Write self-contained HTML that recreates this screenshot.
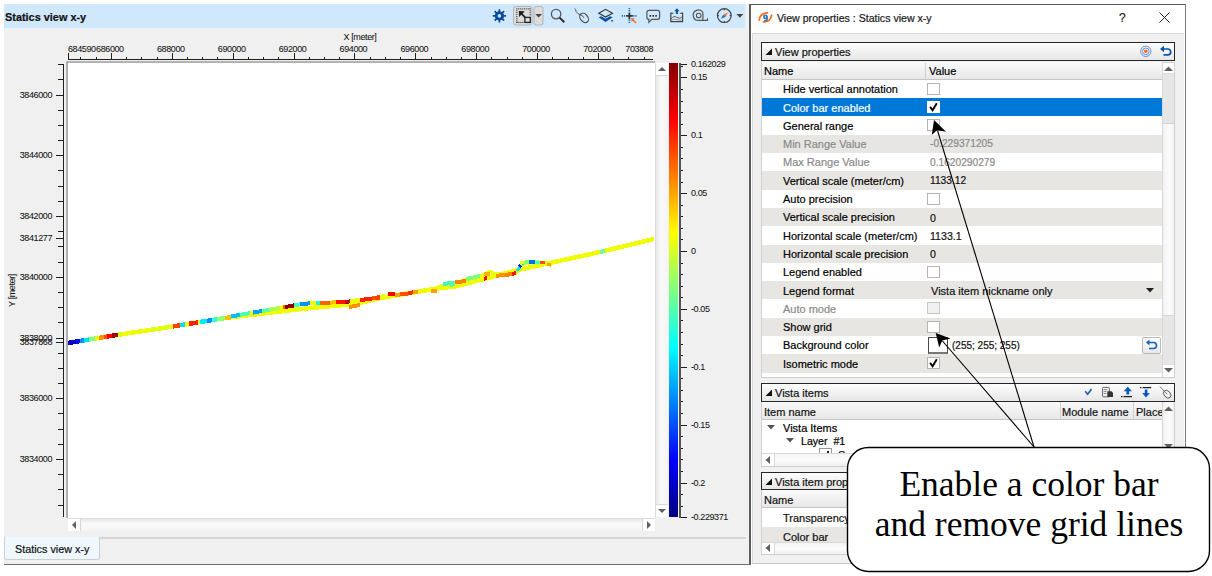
<!DOCTYPE html><html><head><meta charset="utf-8"><style>
html,body{margin:0;padding:0;}
body{width:1212px;height:576px;position:relative;overflow:hidden;background:#fff;font-family:"Liberation Sans", sans-serif;}
.t{position:absolute;white-space:nowrap;line-height:1;-webkit-text-stroke:0.2px currentColor;}
.ax{font-size:9px;letter-spacing:-0.4px;color:#111;-webkit-text-stroke:0.05px currentColor;}
</style></head><body>
<div id="left" style="position:absolute;left:4px;top:4px;width:747px;height:561px;background:#f0f0f0;"></div>
<div style="position:absolute;left:749px;top:4px;width:2px;height:561px;background:#5c5c5c;"></div>
<div style="position:absolute;left:4px;top:564px;width:747px;height:1px;background:#6e6e6e;"></div>
<div style="position:absolute;left:4px;top:4px;width:741px;height:24px;background:#cfe8fc;"></div>
<div class="t" style="left:5px;top:11.5px;font-size:10.9px;font-weight:bold;color:#111;">Statics view x-y</div>
<svg style="position:absolute;left:0;top:0" width="1212" height="576"><rect x="66" y="61" width="589" height="457" fill="#ffffff"/><path d="M67 518 V62 H655" stroke="#9a9a9a" stroke-width="1.6" fill="none"/><path d="M68 59.5 H653" stroke="#1e1e1e" stroke-width="1"/><path d="M80.5 57 V59" stroke="#1e1e1e" stroke-width="1"/><path d="M96.5 57 V59" stroke="#1e1e1e" stroke-width="1"/><path d="M111.5 53 V59" stroke="#1e1e1e" stroke-width="1"/><path d="M126.5 57 V59" stroke="#1e1e1e" stroke-width="1"/><path d="M141.5 57 V59" stroke="#1e1e1e" stroke-width="1"/><path d="M157.5 57 V59" stroke="#1e1e1e" stroke-width="1"/><path d="M172.5 53 V59" stroke="#1e1e1e" stroke-width="1"/><path d="M187.5 57 V59" stroke="#1e1e1e" stroke-width="1"/><path d="M202.5 57 V59" stroke="#1e1e1e" stroke-width="1"/><path d="M217.5 57 V59" stroke="#1e1e1e" stroke-width="1"/><path d="M233.5 53 V59" stroke="#1e1e1e" stroke-width="1"/><path d="M248.5 57 V59" stroke="#1e1e1e" stroke-width="1"/><path d="M263.5 57 V59" stroke="#1e1e1e" stroke-width="1"/><path d="M278.5 57 V59" stroke="#1e1e1e" stroke-width="1"/><path d="M294.5 53 V59" stroke="#1e1e1e" stroke-width="1"/><path d="M309.5 57 V59" stroke="#1e1e1e" stroke-width="1"/><path d="M324.5 57 V59" stroke="#1e1e1e" stroke-width="1"/><path d="M339.5 57 V59" stroke="#1e1e1e" stroke-width="1"/><path d="M354.5 53 V59" stroke="#1e1e1e" stroke-width="1"/><path d="M370.5 57 V59" stroke="#1e1e1e" stroke-width="1"/><path d="M385.5 57 V59" stroke="#1e1e1e" stroke-width="1"/><path d="M400.5 57 V59" stroke="#1e1e1e" stroke-width="1"/><path d="M415.5 53 V59" stroke="#1e1e1e" stroke-width="1"/><path d="M431.5 57 V59" stroke="#1e1e1e" stroke-width="1"/><path d="M446.5 57 V59" stroke="#1e1e1e" stroke-width="1"/><path d="M461.5 57 V59" stroke="#1e1e1e" stroke-width="1"/><path d="M476.5 53 V59" stroke="#1e1e1e" stroke-width="1"/><path d="M491.5 57 V59" stroke="#1e1e1e" stroke-width="1"/><path d="M507.5 57 V59" stroke="#1e1e1e" stroke-width="1"/><path d="M522.5 57 V59" stroke="#1e1e1e" stroke-width="1"/><path d="M537.5 53 V59" stroke="#1e1e1e" stroke-width="1"/><path d="M552.5 57 V59" stroke="#1e1e1e" stroke-width="1"/><path d="M568.5 57 V59" stroke="#1e1e1e" stroke-width="1"/><path d="M583.5 57 V59" stroke="#1e1e1e" stroke-width="1"/><path d="M598.5 53 V59" stroke="#1e1e1e" stroke-width="1"/><path d="M613.5 57 V59" stroke="#1e1e1e" stroke-width="1"/><path d="M628.5 57 V59" stroke="#1e1e1e" stroke-width="1"/><path d="M644.5 57 V59" stroke="#1e1e1e" stroke-width="1"/><path d="M68.5 53 V59" stroke="#1e1e1e" stroke-width="1"/><path d="M63.5 64 V517" stroke="#1e1e1e" stroke-width="1"/><path d="M58 64.5 H63" stroke="#1e1e1e" stroke-width="1"/><path d="M58 79.5 H63" stroke="#1e1e1e" stroke-width="1"/><path d="M56 95.5 H63" stroke="#1e1e1e" stroke-width="1"/><path d="M58 110.5 H63" stroke="#1e1e1e" stroke-width="1"/><path d="M58 125.5 H63" stroke="#1e1e1e" stroke-width="1"/><path d="M58 140.5 H63" stroke="#1e1e1e" stroke-width="1"/><path d="M56 155.5 H63" stroke="#1e1e1e" stroke-width="1"/><path d="M58 170.5 H63" stroke="#1e1e1e" stroke-width="1"/><path d="M58 186.5 H63" stroke="#1e1e1e" stroke-width="1"/><path d="M58 201.5 H63" stroke="#1e1e1e" stroke-width="1"/><path d="M56 216.5 H63" stroke="#1e1e1e" stroke-width="1"/><path d="M58 231.5 H63" stroke="#1e1e1e" stroke-width="1"/><path d="M58 246.5 H63" stroke="#1e1e1e" stroke-width="1"/><path d="M58 262.5 H63" stroke="#1e1e1e" stroke-width="1"/><path d="M56 277.5 H63" stroke="#1e1e1e" stroke-width="1"/><path d="M58 292.5 H63" stroke="#1e1e1e" stroke-width="1"/><path d="M58 307.5 H63" stroke="#1e1e1e" stroke-width="1"/><path d="M58 322.5 H63" stroke="#1e1e1e" stroke-width="1"/><path d="M56 338.5 H63" stroke="#1e1e1e" stroke-width="1"/><path d="M58 353.5 H63" stroke="#1e1e1e" stroke-width="1"/><path d="M58 368.5 H63" stroke="#1e1e1e" stroke-width="1"/><path d="M58 383.5 H63" stroke="#1e1e1e" stroke-width="1"/><path d="M56 398.5 H63" stroke="#1e1e1e" stroke-width="1"/><path d="M58 413.5 H63" stroke="#1e1e1e" stroke-width="1"/><path d="M58 429.5 H63" stroke="#1e1e1e" stroke-width="1"/><path d="M58 444.5 H63" stroke="#1e1e1e" stroke-width="1"/><path d="M56 459.5 H63" stroke="#1e1e1e" stroke-width="1"/><path d="M58 474.5 H63" stroke="#1e1e1e" stroke-width="1"/><path d="M58 489.5 H63" stroke="#1e1e1e" stroke-width="1"/><path d="M58 505.5 H63" stroke="#1e1e1e" stroke-width="1"/><path d="M56 238.5 H63" stroke="#1e1e1e" stroke-width="1"/><path d="M56 342.5 H63" stroke="#1e1e1e" stroke-width="1"/><g shape-rendering="crispEdges"><path d="M68.0 343.0 L120.0 334.5 L160.0 328.5 L225.0 318.0 L305.0 308.5 L355.0 304.0 L380.0 298.0 L440.0 288.0 L455.0 286.5 L520.0 269.5 L600.0 252.0 L654.0 239.0" stroke="#f0ff00" stroke-width="4.5" fill="none" stroke-linejoin="round"/><path d="M228.0 317.0 L305.0 303.5 L345.0 302.0 L372.0 298.5 L385.0 296.0" stroke="#f0ff00" stroke-width="4" fill="none" stroke-linejoin="round"/><path d="M438.0 287.5 L447.0 284.0 L455.0 283.0 L480.0 276.5 L490.0 272.0 L496.0 274.5 L516.0 273.0 L519.0 268.0 L523.0 263.5 L535.0 262.0 L552.0 264.0" stroke="#e8ff10" stroke-width="4" fill="none" stroke-linejoin="round"/><path d="M68.0 343.0 L76.0 341.7" stroke="#0000c0" stroke-width="4.5"/><path d="M76.0 341.7 L80.0 341.0" stroke="#0010f0" stroke-width="4.5"/><path d="M80.0 341.0 L84.0 340.4" stroke="#0090ff" stroke-width="4.5"/><path d="M84.0 340.4 L89.0 339.6" stroke="#00e0f0" stroke-width="4.5"/><path d="M89.0 339.6 L95.0 338.6" stroke="#80ff80" stroke-width="4.5"/><path d="M95.0 338.6 L99.0 337.9" stroke="#f0ff00" stroke-width="4.5"/><path d="M99.0 337.9 L104.0 337.1" stroke="#ff9000" stroke-width="4.5"/><path d="M104.0 337.1 L107.0 336.6" stroke="#ff5000" stroke-width="4.5"/><path d="M107.0 336.6 L112.0 335.8" stroke="#ff0000" stroke-width="4.5"/><path d="M112.0 335.8 L118.0 334.8" stroke="#a00000" stroke-width="4.5"/><path d="M118.0 334.8 L121.0 334.4" stroke="#d0ff20" stroke-width="4.5"/><path d="M150.0 330.0 L173.0 326.4" stroke="#e0ff10" stroke-width="4.5"/><path d="M173.0 326.4 L180.0 325.3" stroke="#ff4000" stroke-width="4.5"/><path d="M180.0 325.3 L185.0 324.5" stroke="#00e0ff" stroke-width="4.5"/><path d="M185.0 324.5 L189.0 323.8" stroke="#f8ff00" stroke-width="4.5"/><path d="M189.0 323.8 L198.0 322.4" stroke="#ff2000" stroke-width="4.5"/><path d="M200.0 322.0 L207.0 320.9" stroke="#00e8ff" stroke-width="4.5"/><path d="M207.0 320.9 L212.0 320.1" stroke="#0090ff" stroke-width="4.5"/><path d="M212.0 320.1 L217.0 319.3" stroke="#30ffd0" stroke-width="4.5"/><path d="M217.0 319.3 L225.0 318.0" stroke="#90ff70" stroke-width="4.5"/><path d="M225.0 318.0 L231.0 317.3" stroke="#ffc000" stroke-width="4.5"/><path d="M600.0 252.0 L605.0 250.8" stroke="#70ffa0" stroke-width="4.5"/><path d="M231.0 316.5 L240.0 314.9" stroke="#00c0ff" stroke-width="4"/><path d="M240.0 314.9 L250.0 313.1" stroke="#50ffb0" stroke-width="4"/><path d="M253.0 312.6 L262.0 311.0" stroke="#00a0ff" stroke-width="4"/><path d="M262.0 311.0 L270.0 309.6" stroke="#60ffa0" stroke-width="4"/><path d="M270.0 309.6 L280.0 307.9" stroke="#b0ff50" stroke-width="4"/><path d="M283.0 307.4 L285.0 307.0" stroke="#ff6000" stroke-width="4"/><path d="M285.0 307.0 L294.0 305.4" stroke="#900000" stroke-width="4"/><path d="M294.0 305.4 L295.0 305.3" stroke="#ff6000" stroke-width="4"/><path d="M294.0 305.4 L300.0 304.4" stroke="#40ffc0" stroke-width="4"/><path d="M300.0 304.4 L310.0 303.3" stroke="#0090ff" stroke-width="4"/><path d="M316.0 303.1 L320.0 302.9" stroke="#20f0e0" stroke-width="4"/><path d="M320.0 302.9 L330.0 302.6" stroke="#ff6000" stroke-width="4"/><path d="M330.0 302.6 L336.0 302.3" stroke="#ffc000" stroke-width="4"/><path d="M336.0 302.3 L345.0 302.0" stroke="#ff1000" stroke-width="4"/><path d="M345.0 302.0 L350.0 301.4" stroke="#c00000" stroke-width="4"/><path d="M360.0 300.1 L372.0 298.5" stroke="#ff2000" stroke-width="4"/><path d="M372.0 298.5 L380.0 297.0" stroke="#ff5000" stroke-width="4"/><path d="M349.0 307.0 L360.0 305.0" stroke="#ff9000" stroke-width="4"/><path d="M375.0 298.0 L380.0 297.5" stroke="#ff4000" stroke-width="4"/><path d="M388.0 294.5 L395.0 293.5" stroke="#f00000" stroke-width="4"/><path d="M395.0 295.0 L400.0 294.5" stroke="#ffa000" stroke-width="4"/><path d="M400.0 294.5 L408.0 293.5" stroke="#ff5000" stroke-width="4"/><path d="M408.0 293.0 L416.0 292.0" stroke="#ff3000" stroke-width="4"/><path d="M413.0 292.0 L418.0 291.5" stroke="#ffa000" stroke-width="4"/><path d="M431.0 291.5 L437.0 290.5" stroke="#ffa000" stroke-width="4"/><path d="M443.0 284.0 L455.0 282.5" stroke="#40ffc0" stroke-width="4"/><path d="M450.0 285.0 L455.0 284.0" stroke="#60ffa0" stroke-width="4"/><path d="M455.0 282.5 L466.0 281.0" stroke="#ff8000" stroke-width="4"/><path d="M466.0 279.0 L480.0 276.0" stroke="#80ff80" stroke-width="4"/><path d="M484.0 278.7 L487.0 278.2" stroke="#ff0000" stroke-width="4"/><path d="M484.0 274.5 L490.0 273.5" stroke="#ffb000" stroke-width="4"/><path d="M496.0 275.8 L505.0 275.0" stroke="#ff9000" stroke-width="4"/><path d="M505.0 275.0 L512.0 274.0" stroke="#ff8000" stroke-width="4"/><path d="M512.0 273.8 L516.0 273.2" stroke="#ff1000" stroke-width="4"/><path d="M517.0 271.0 L520.0 267.0" stroke="#00e0ff" stroke-width="3"/><path d="M519.0 267.0 L521.0 265.0" stroke="#0020ff" stroke-width="3"/><path d="M521.0 264.5 L524.0 263.0" stroke="#00e0ff" stroke-width="3"/><path d="M520.0 263.0 L524.0 262.5" stroke="#f8ff00" stroke-width="3.5"/><path d="M524.0 262.3 L529.0 262.0" stroke="#80ff60" stroke-width="3.5"/><path d="M529.0 261.8 L535.0 261.8" stroke="#0070ff" stroke-width="3.5"/><path d="M535.0 262.3 L540.0 262.5" stroke="#40ffd0" stroke-width="3.5"/><path d="M540.0 262.5 L545.0 262.7" stroke="#ff5000" stroke-width="3.5"/><path d="M547.0 264.5 L551.0 264.8" stroke="#ffa000" stroke-width="3.5"/></g><defs><linearGradient id="jet" x1="0" y1="0" x2="0" y2="1"><stop offset="0" stop-color="#800000"/><stop offset="0.125" stop-color="#ff0000"/><stop offset="0.375" stop-color="#ffff00"/><stop offset="0.625" stop-color="#00ffff"/><stop offset="0.875" stop-color="#0000ff"/><stop offset="1" stop-color="#000080"/></linearGradient></defs><rect x="669" y="63" width="9" height="454" fill="url(#jet)"/><path d="M680 63 V518" stroke="#555" stroke-width="2"/><path d="M681 66.5 H683" stroke="#1a1a1a" stroke-width="1"/><path d="M681 77.5 H687" stroke="#1a1a1a" stroke-width="1"/><path d="M681 89.5 H683" stroke="#1a1a1a" stroke-width="1"/><path d="M681 101.5 H683" stroke="#1a1a1a" stroke-width="1"/><path d="M681 112.5 H683" stroke="#1a1a1a" stroke-width="1"/><path d="M681 124.5 H683" stroke="#1a1a1a" stroke-width="1"/><path d="M681 135.5 H687" stroke="#1a1a1a" stroke-width="1"/><path d="M681 147.5 H683" stroke="#1a1a1a" stroke-width="1"/><path d="M681 158.5 H683" stroke="#1a1a1a" stroke-width="1"/><path d="M681 170.5 H683" stroke="#1a1a1a" stroke-width="1"/><path d="M681 182.5 H683" stroke="#1a1a1a" stroke-width="1"/><path d="M681 193.5 H687" stroke="#1a1a1a" stroke-width="1"/><path d="M681 205.5 H683" stroke="#1a1a1a" stroke-width="1"/><path d="M681 216.5 H683" stroke="#1a1a1a" stroke-width="1"/><path d="M681 228.5 H683" stroke="#1a1a1a" stroke-width="1"/><path d="M681 239.5 H683" stroke="#1a1a1a" stroke-width="1"/><path d="M681 251.5 H687" stroke="#1a1a1a" stroke-width="1"/><path d="M681 263.5 H683" stroke="#1a1a1a" stroke-width="1"/><path d="M681 274.5 H683" stroke="#1a1a1a" stroke-width="1"/><path d="M681 286.5 H683" stroke="#1a1a1a" stroke-width="1"/><path d="M681 297.5 H683" stroke="#1a1a1a" stroke-width="1"/><path d="M681 309.5 H687" stroke="#1a1a1a" stroke-width="1"/><path d="M681 320.5 H683" stroke="#1a1a1a" stroke-width="1"/><path d="M681 332.5 H683" stroke="#1a1a1a" stroke-width="1"/><path d="M681 344.5 H683" stroke="#1a1a1a" stroke-width="1"/><path d="M681 355.5 H683" stroke="#1a1a1a" stroke-width="1"/><path d="M681 367.5 H687" stroke="#1a1a1a" stroke-width="1"/><path d="M681 378.5 H683" stroke="#1a1a1a" stroke-width="1"/><path d="M681 390.5 H683" stroke="#1a1a1a" stroke-width="1"/><path d="M681 401.5 H683" stroke="#1a1a1a" stroke-width="1"/><path d="M681 413.5 H683" stroke="#1a1a1a" stroke-width="1"/><path d="M681 425.5 H687" stroke="#1a1a1a" stroke-width="1"/><path d="M681 436.5 H683" stroke="#1a1a1a" stroke-width="1"/><path d="M681 448.5 H683" stroke="#1a1a1a" stroke-width="1"/><path d="M681 459.5 H683" stroke="#1a1a1a" stroke-width="1"/><path d="M681 471.5 H683" stroke="#1a1a1a" stroke-width="1"/><path d="M681 483.5 H687" stroke="#1a1a1a" stroke-width="1"/><path d="M681 494.5 H683" stroke="#1a1a1a" stroke-width="1"/><path d="M681 506.5 H683" stroke="#1a1a1a" stroke-width="1"/><path d="M681 64.5 H687" stroke="#1a1a1a" stroke-width="1"/><path d="M681 517.5 H687" stroke="#1a1a1a" stroke-width="1"/></svg>
<div class="t ax" style="left:336px;top:33px;width:48px;text-align:center;">X [meter]</div>
<div class="t ax" style="left:68px;top:44.5px;">684590</div>
<div class="t ax" style="left:109.9px;top:44.5px;width:40px;margin-left:-20px;text-align:center;">686000</div>
<div class="t ax" style="left:170.8px;top:44.5px;width:40px;margin-left:-20px;text-align:center;">688000</div>
<div class="t ax" style="left:231.7px;top:44.5px;width:40px;margin-left:-20px;text-align:center;">690000</div>
<div class="t ax" style="left:292.6px;top:44.5px;width:40px;margin-left:-20px;text-align:center;">692000</div>
<div class="t ax" style="left:353.4px;top:44.5px;width:40px;margin-left:-20px;text-align:center;">694000</div>
<div class="t ax" style="left:414.3px;top:44.5px;width:40px;margin-left:-20px;text-align:center;">696000</div>
<div class="t ax" style="left:475.2px;top:44.5px;width:40px;margin-left:-20px;text-align:center;">698000</div>
<div class="t ax" style="left:536.1px;top:44.5px;width:40px;margin-left:-20px;text-align:center;">700000</div>
<div class="t ax" style="left:597.0px;top:44.5px;width:40px;margin-left:-20px;text-align:center;">702000</div>
<div class="t ax" style="left:613px;top:44.5px;width:40px;text-align:right;">703808</div>
<div class="t ax" style="left:12px;top:90.5px;width:40px;text-align:right;">3846000</div>
<div class="t ax" style="left:12px;top:151.2px;width:40px;text-align:right;">3844000</div>
<div class="t ax" style="left:12px;top:212.0px;width:40px;text-align:right;">3842000</div>
<div class="t ax" style="left:12px;top:234.0px;width:40px;text-align:right;">3841277</div>
<div class="t ax" style="left:12px;top:272.8px;width:40px;text-align:right;">3840000</div>
<div class="t ax" style="left:12px;top:333.5px;width:40px;text-align:right;">3838000</div>
<div class="t ax" style="left:12px;top:337.5px;width:40px;text-align:right;">3837868</div>
<div class="t ax" style="left:12px;top:394.2px;width:40px;text-align:right;">3836000</div>
<div class="t ax" style="left:12px;top:455.0px;width:40px;text-align:right;">3834000</div>
<div class="t ax" style="left:-8px;top:286px;width:40px;text-align:center;transform:rotate(-90deg);">Y [meter]</div>
<div class="t ax" style="left:691px;top:59.5px;">0.162029</div>
<div class="t ax" style="left:691px;top:73.4px;">0.15</div>
<div class="t ax" style="left:691px;top:131.3px;">0.1</div>
<div class="t ax" style="left:691px;top:189.2px;">0.05</div>
<div class="t ax" style="left:691px;top:247.0px;">0</div>
<div class="t ax" style="left:691px;top:304.9px;">-0.05</div>
<div class="t ax" style="left:691px;top:362.8px;">-0.1</div>
<div class="t ax" style="left:691px;top:420.6px;">-0.15</div>
<div class="t ax" style="left:691px;top:478.5px;">-0.2</div>
<div class="t ax" style="left:691px;top:512.5px;">-0.229371</div>
<div style="position:absolute;left:655px;top:63px;width:13px;height:455px;background:linear-gradient(90deg,#e8e8e8,#fafafa 40%,#f4f4f4);border-left:1px solid #dcdcdc;box-sizing:border-box;"></div>
<div style="position:absolute;left:656px;top:63px;width:12px;height:13px;background:#fff;border-bottom:1px solid #d8d8d8;box-sizing:border-box;"></div>
<div style="position:absolute;left:657.5px;top:67px;width:0;height:0;border-left:4px solid transparent;border-right:4px solid transparent;border-bottom:4px solid #606060;"></div>
<div style="position:absolute;left:656px;top:504px;width:12px;height:13px;background:#fff;border-top:1px solid #d8d8d8;box-sizing:border-box;"></div>
<div style="position:absolute;left:657.5px;top:509px;width:0;height:0;border-left:4px solid transparent;border-right:4px solid transparent;border-top:4px solid #606060;"></div>
<div style="position:absolute;left:68px;top:518px;width:587px;height:13px;background:linear-gradient(180deg,#e8e8e8,#fafafa 40%,#f4f4f4);border-top:1px solid #dcdcdc;box-sizing:border-box;"></div>
<div style="position:absolute;left:68px;top:519px;width:13px;height:12px;background:#fff;border-right:1px solid #d8d8d8;box-sizing:border-box;"></div>
<div style="position:absolute;left:72px;top:521px;width:0;height:0;border-top:4px solid transparent;border-bottom:4px solid transparent;border-right:4px solid #606060;"></div>
<div style="position:absolute;left:642px;top:519px;width:13px;height:12px;background:#fff;border-left:1px solid #d8d8d8;box-sizing:border-box;"></div>
<div style="position:absolute;left:647px;top:521px;width:0;height:0;border-top:4px solid transparent;border-bottom:4px solid transparent;border-left:4px solid #606060;"></div>
<div style="position:absolute;left:99px;top:537px;width:647px;height:2px;background:#d6d6d6;"></div>
<div style="position:absolute;left:4px;top:537px;width:96px;height:23px;background:#eef8fe;border:1px solid #cfcfcf;border-top:none;border-radius:0 0 3px 3px;box-sizing:border-box;"></div>
<div class="t" style="left:15px;top:544px;font-size:10.8px;color:#111;">Statics view x-y</div>
<svg style="position:absolute;left:0;top:0" width="1212" height="576" viewBox="0 0 1212 576"><path d="M498.49 11.59 L498.53 9.26 L500.27 9.26 L500.31 11.59 L501.80 12.21 L503.49 10.59 L504.71 11.81 L503.09 13.50 L503.71 14.99 L506.04 15.03 L506.04 16.77 L503.71 16.81 L503.09 18.30 L504.71 19.99 L503.49 21.21 L501.80 19.59 L500.31 20.21 L500.27 22.54 L498.53 22.54 L498.49 20.21 L497.00 19.59 L495.31 21.21 L494.09 19.99 L495.71 18.30 L495.09 16.81 L492.76 16.77 L492.76 15.03 L495.09 14.99 L495.71 13.50 L494.09 11.81 L495.31 10.59 L497.00 12.21 Z" fill="#0a4b9e"/><circle cx="499.4" cy="15.9" r="4.5" fill="#0a4b9e"/><circle cx="499.4" cy="15.9" r="1.8" fill="#cfe8fc"/><rect x="513.5" y="6.5" width="18.5" height="18.5" rx="2" fill="#dcdcdc" stroke="#b4b4b4" stroke-width="1"/><rect x="534" y="6.5" width="9" height="18.5" rx="2" fill="#dcdcdc" stroke="#b4b4b4" stroke-width="1"/><path d="M535.3 14.1 H542 L538.65 17.6 Z" fill="#444"/><rect x="516.3" y="8.3" width="1" height="1.2" fill="#333"/><rect x="518.3" y="8.3" width="1" height="1.2" fill="#333"/><rect x="520.3" y="8.3" width="1" height="1.2" fill="#333"/><rect x="522.3" y="8.3" width="1" height="1.2" fill="#333"/><rect x="524.3" y="8.3" width="1" height="1.2" fill="#333"/><rect x="526.3" y="8.3" width="1" height="1.2" fill="#333"/><rect x="528.3" y="8.3" width="1" height="1.2" fill="#333"/><rect x="516.3" y="10.3" width="1.1" height="1" fill="#333"/><rect x="516.3" y="12.2" width="1.1" height="1" fill="#333"/><rect x="516.3" y="14.1" width="1.1" height="1" fill="#333"/><rect x="516.3" y="16.0" width="1.1" height="1" fill="#333"/><rect x="516.3" y="17.9" width="1.1" height="1" fill="#333"/><rect x="516.3" y="19.8" width="1.1" height="1" fill="#333"/><rect x="516.3" y="21.7" width="1.1" height="1" fill="#333"/><rect x="516.3" y="21.9" width="1.2" height="1.1" fill="#333"/><rect x="518.3" y="21.9" width="1.2" height="1.1" fill="#333"/><rect x="520.3" y="21.9" width="1.2" height="1.1" fill="#333"/><rect x="522.3" y="21.9" width="1.2" height="1.1" fill="#333"/><rect x="529.6" y="8.3" width="1.1" height="1" fill="#333"/><rect x="529.6" y="10.3" width="1.1" height="1" fill="#333"/><rect x="529.6" y="12.3" width="1.1" height="1" fill="#333"/><rect x="529.6" y="14.3" width="1.1" height="1" fill="#333"/><path d="M518.8 11 L524.8 11.3 L519.1 17 Z" fill="#1e1e1e"/><path d="M521 13.2 L525.3 17.6" stroke="#1e1e1e" stroke-width="1.7"/><rect x="524.9" y="17.4" width="5.4" height="5" fill="#e0e0e0" stroke="#1e1e1e" stroke-width="1.3"/><circle cx="556.1" cy="14.1" r="4.7" fill="none" stroke="#555" stroke-width="1.3"/><path d="M559.6 17.6 L564.3 22.2" stroke="#2a2a2a" stroke-width="2"/><path d="M574.6 8.6 Q576.5 9.5 576 11.5 Q577.5 14 581.5 15.5" stroke="#444" stroke-width="0.9" fill="none"/><ellipse cx="584.1" cy="17.9" rx="3.7" ry="5.2" transform="rotate(-38 584.1 17.9)" fill="none" stroke="#444" stroke-width="1.1"/><path d="M581.2 14.6 L584.1 17.9" stroke="#444" stroke-width="0.9"/><path d="M598.8 13.2 L605.5 9.3 L612.5 13.2 L605.5 17.1 Z" fill="none" stroke="#333" stroke-width="1.1"/><path d="M598.6 17.3 L601 16.2 L605.5 18.7 L610 16.2 L612.7 17.3 L605.5 21.9 Z" fill="#0b4fa6"/><path d="M610.5 20.5 L613.2 19.8 L612.3 22.3 Z" fill="#555"/><path d="M626.1 15.8 H632.8 M629.4 12.4 V19.3" stroke="#333" stroke-width="1.8"/><path d="M621.8 15.8 H625.8 M633.2 15.8 H637 M629.4 8 V12 M629.4 19.6 V23.2" stroke="#1b6fd0" stroke-width="1.7" stroke-dasharray="1.2 0.9"/><path d="M631.2 18.3 L634.8 18.6 L631.6 21.8 Z" fill="#f26a1b"/><path d="M632.5 19.6 L636 23" stroke="#f26a1b" stroke-width="1.4"/><path d="M649 10.4 H657.6 Q659.6 10.4 659.6 12.4 V17.3 Q659.6 19.3 657.6 19.3 H651.8 L648.9 22.3 V19.3 Q646.9 19.3 646.9 17.3 V12.4 Q646.9 10.4 649 10.4 Z" fill="none" stroke="#555" stroke-width="1.2"/><path d="M649.6 15.9 H651.1 M652.5 15.9 H654 M655.3 15.9 H656.8" stroke="#222" stroke-width="1.6"/><path d="M670.8 12.6 V21.6 H682.6 V12.6" fill="none" stroke="#444" stroke-width="1.2"/><path d="M670.8 13.2 H673.5 M679.8 13.2 H682.6" stroke="#444" stroke-width="1.1"/><path d="M671 19 Q674 15 677 17.5 Q680 19.5 682.5 16.5" fill="none" stroke="#555" stroke-width="0.9"/><path d="M671 20.3 Q675 18.5 678 19.8 Q680.5 20.8 682.5 19.5" fill="none" stroke="#777" stroke-width="0.7"/><path d="M676.9 8.3 L674.2 11.2 H675.9 V14 H677.9 V11.2 H679.6 Z" fill="#0b4fa6"/><path d="M707.5 20.4 H698.7 A5.2 5.2 0 1 1 702.9 12.5 V20.4" fill="none" stroke="#555" stroke-width="1.2"/><circle cx="698.7" cy="15.5" r="2.3" fill="none" stroke="#555" stroke-width="1.1"/><path d="M707.5 18.2 V20.9" stroke="#555" stroke-width="1.1"/><circle cx="724.3" cy="15.6" r="6.9" fill="none" stroke="#444" stroke-width="1.2"/><path d="M724.3 8.8 V10.2 M724.3 21 V22.4 M717.5 15.6 H718.9 M729.7 15.6 H731.1" stroke="#444" stroke-width="1.2"/><path d="M727.8 12.4 L725.6 16.8 L723.2 14.8 Z" fill="#f26a1b"/><path d="M720.8 18.8 L723.2 14.8 L725.6 16.8 Z" fill="#1b6fd0"/><path d="M736.4 14 H743.3 L739.85 17.7 Z" fill="#444"/></svg>
<div style="position:absolute;left:751px;top:4px;width:435px;height:560px;background:#fff;border-top:1px solid #5a5a5a;border-right:1px solid #7a7a7a;box-sizing:border-box;"></div>
<svg style="position:absolute;left:754px;top:8px" width="24" height="20" viewBox="0 0 24 20"><path d="M5.2 12.2 Q6 5.2 13.5 4.9" stroke="#ff6a14" stroke-width="1.7" fill="none" stroke-linecap="round"/><path d="M17.6 7.2 Q17 13.8 9.5 13.9" stroke="#ff6a14" stroke-width="1.7" fill="none" stroke-linecap="round"/><circle cx="11.4" cy="8.9" r="1.6" fill="none" stroke="#2b78c0" stroke-width="1.7"/><path d="M13 8.5 V11.5 Q13 12.6 11.2 12.6 H10.2" stroke="#2b78c0" stroke-width="1.7" fill="none"/></svg>
<div class="t" style="left:777px;top:13px;font-size:10.6px;color:#1a1a1a;">View properties : Statics view x-y</div>
<div class="t" style="left:1119px;top:12px;font-size:12px;color:#222;">?</div>
<svg style="position:absolute;left:1159px;top:12px" width="11" height="11" viewBox="0 0 11 11"><path d="M0.5 0.5 L10.5 10.5 M10.5 0.5 L0.5 10.5" stroke="#222" stroke-width="1"/></svg>
<div style="position:absolute;left:752px;top:33px;width:432px;height:531px;background:#f0f0f0;border-top:1px solid #dadada;border-left:1px solid #dadada;box-sizing:border-box;"></div>
<div style="position:absolute;left:752px;top:563px;width:434px;height:1px;background:#c8c8c8;"></div>
<div style="position:absolute;z-index:2;left:761px;top:42px;width:414px;height:19px;background:linear-gradient(#fefefe,#e6e6e6);border:1.5px solid #262626;box-sizing:border-box;"></div>
<svg style="position:absolute;z-index:3;left:765px;top:48px" width="8" height="8" viewBox="0 0 8 8"><path d="M7 0.5 V7 H0.5 Z" fill="#111"/></svg>
<div class="t" style="z-index:3;left:775px;top:46.5px;font-size:11px;color:#111;">View properties</div>
<svg style="position:absolute;z-index:3;left:1138px;top:44px" width="15" height="15" viewBox="0 0 15 15"><circle cx="7.8" cy="7.3" r="5.2" stroke="#4a82c8" stroke-width="0.85" fill="none"/><circle cx="7.8" cy="7.3" r="3.3" stroke="#4a82c8" stroke-width="0.85" fill="none"/><circle cx="7.8" cy="7.3" r="1.8" fill="#f26a1b"/></svg>
<svg style="position:absolute;z-index:3;left:1159px;top:44px" width="14" height="14" viewBox="0 0 14 14"><path d="M3.5 5 H8.8 A2.9 2.9 0 0 1 8.8 10.8 H4.5" stroke="#0b55a8" stroke-width="1.7" fill="none"/><path d="M1 5 L5 1.8 V8.2 Z" fill="#0b55a8"/></svg>
<div style="position:absolute;left:761px;top:62px;width:414px;height:316px;background:#fff;border:1px solid #cfcfcf;box-sizing:border-box;"></div>
<div style="position:absolute;left:762px;top:62px;width:400px;height:18px;background:linear-gradient(#fafafa,#e8e8e8);border-bottom:1px solid #c4c4c4;box-sizing:border-box;"></div>
<div style="position:absolute;left:925px;top:63px;width:1px;height:16px;background:#d0d0d0;"></div>
<div class="t" style="left:764px;top:66.3px;font-size:11px;color:#000;">Name</div>
<div class="t" style="left:929px;top:66.3px;font-size:11px;color:#000;">Value</div>
<div class="t" style="left:783px;top:84.2px;font-size:11px;color:#000000;">Hide vertical annotation</div>
<div style="position:absolute;left:927px;top:82.8px;width:13px;height:12px;background:#ffffff;border:1px solid #b4b4b4;box-sizing:border-box;"></div>
<div style="position:absolute;left:762px;top:98.1px;width:400px;height:18.3px;background:#0078d7;"></div>
<div class="t" style="left:783px;top:102.5px;font-size:11px;color:#ffffff;">Color bar enabled</div>
<div style="position:absolute;left:927px;top:101.1px;width:13px;height:12px;background:#ffffff;border:1px solid #ffffff;box-sizing:border-box;"></div>
<svg style="position:absolute;left:927px;top:101.1px" width="13" height="12" viewBox="0 0 13 12"><path d="M3.1 5.9 L5.6 9.3 L9.8 2.3" stroke="#000" stroke-width="1.9" fill="none"/></svg>
<div class="t" style="left:783px;top:120.8px;font-size:11px;color:#000000;">General range</div>
<div style="position:absolute;left:927px;top:119.4px;width:13px;height:12px;background:#ffffff;border:1px solid #b4b4b4;box-sizing:border-box;"></div>
<div style="position:absolute;left:762px;top:134.7px;width:400px;height:18.3px;background:#e7e6e3;"></div>
<div class="t" style="left:783px;top:139.1px;font-size:11px;color:#8a8a8a;">Min Range Value</div>
<div class="t" style="left:930px;top:139.3px;font-size:10.2px;color:#8a8a8a;">-0.229371205</div>
<div class="t" style="left:783px;top:157.4px;font-size:11px;color:#8a8a8a;">Max Range Value</div>
<div class="t" style="left:930px;top:157.6px;font-size:10.2px;color:#8a8a8a;">0.1620290279</div>
<div style="position:absolute;left:762px;top:171.3px;width:400px;height:18.3px;background:#e7e6e3;"></div>
<div class="t" style="left:783px;top:175.7px;font-size:11px;color:#000000;">Vertical scale (meter/cm)</div>
<div class="t" style="left:930px;top:175.9px;font-size:10.2px;color:#111;">1133.12</div>
<div class="t" style="left:783px;top:194.0px;font-size:11px;color:#000000;">Auto precision</div>
<div style="position:absolute;left:927px;top:192.6px;width:13px;height:12px;background:#ffffff;border:1px solid #b4b4b4;box-sizing:border-box;"></div>
<div style="position:absolute;left:762px;top:207.9px;width:400px;height:18.3px;background:#e7e6e3;"></div>
<div class="t" style="left:783px;top:212.3px;font-size:11px;color:#000000;">Vertical scale precision</div>
<div class="t" style="left:930px;top:212.5px;font-size:10.6px;color:#111;">0</div>
<div class="t" style="left:783px;top:230.6px;font-size:11px;color:#000000;">Horizontal scale (meter/cm)</div>
<div class="t" style="left:930px;top:230.8px;font-size:10.6px;color:#111;">1133.1</div>
<div style="position:absolute;left:762px;top:244.5px;width:400px;height:18.3px;background:#e7e6e3;"></div>
<div class="t" style="left:783px;top:248.9px;font-size:11px;color:#000000;">Horizontal scale precision</div>
<div class="t" style="left:930px;top:249.1px;font-size:10.6px;color:#111;">0</div>
<div class="t" style="left:783px;top:267.2px;font-size:11px;color:#000000;">Legend enabled</div>
<div style="position:absolute;left:927px;top:265.8px;width:13px;height:12px;background:#ffffff;border:1px solid #b4b4b4;box-sizing:border-box;"></div>
<div style="position:absolute;left:762px;top:281.1px;width:400px;height:18.3px;background:#e7e6e3;"></div>
<div class="t" style="left:783px;top:285.5px;font-size:11px;color:#000000;">Legend format</div>
<div class="t" style="left:931px;top:285.5px;font-size:11px;color:#111;">Vista item nickname only</div>
<svg style="position:absolute;left:1146px;top:288.1px" width="8" height="5" viewBox="0 0 8 5"><path d="M0 0 H8 L4 4.5 Z" fill="#222"/></svg>
<div class="t" style="left:783px;top:303.8px;font-size:11px;color:#8a8a8a;">Auto mode</div>
<div style="position:absolute;left:927px;top:302.4px;width:13px;height:12px;background:#f0f0f0;border:1px solid #c8c8c8;box-sizing:border-box;"></div>
<div style="position:absolute;left:762px;top:317.7px;width:400px;height:18.3px;background:#e7e6e3;"></div>
<div class="t" style="left:783px;top:322.1px;font-size:11px;color:#000000;">Show grid</div>
<div style="position:absolute;left:927px;top:320.7px;width:13px;height:12px;background:#ffffff;border:1px solid #b4b4b4;box-sizing:border-box;"></div>
<div class="t" style="left:783px;top:340.4px;font-size:11px;color:#000000;">Background color</div>
<div style="position:absolute;left:928px;top:336.5px;width:20px;height:17px;background:#fff;border:1px solid #4a4a4a;border-bottom:2px solid #777;box-sizing:border-box;"></div>
<div class="t" style="left:952px;top:340.8px;font-size:10px;color:#111;">(255; 255; 255)</div>
<div style="position:absolute;left:1142px;top:336.5px;width:19px;height:17px;background:linear-gradient(#fdfdfd,#e8e8e8);border:1px solid #b8b8b8;border-radius:2px;box-sizing:border-box;"></div>
<svg style="position:absolute;left:1145px;top:338.5px" width="14" height="12" viewBox="0 0 14 12"><path d="M3 3.5 H8.5 A3 3 0 0 1 8.5 9.5 H4" stroke="#1c5fb8" stroke-width="1.6" fill="none"/><path d="M1 3.5 L4.5 0.5 V6.5 Z" fill="#1c5fb8"/></svg>
<div style="position:absolute;left:762px;top:354.3px;width:400px;height:18.3px;background:#e7e6e3;"></div>
<div class="t" style="left:783px;top:358.7px;font-size:11px;color:#000000;">Isometric mode</div>
<div style="position:absolute;left:927px;top:357.3px;width:13px;height:12px;background:#ffffff;border:1px solid #b4b4b4;box-sizing:border-box;"></div>
<svg style="position:absolute;left:927px;top:357.3px" width="13" height="12" viewBox="0 0 13 12"><path d="M3.1 5.9 L5.6 9.3 L9.8 2.3" stroke="#000" stroke-width="1.9" fill="none"/></svg>
<div style="position:absolute;left:1162px;top:63px;width:12px;height:314px;background:#e6e6e6;border-left:1px solid #d8d8d8;box-sizing:border-box;"></div>
<div style="position:absolute;left:1162px;top:63px;width:12px;height:11px;background:#fff;border-left:1px solid #d8d8d8;border-bottom:1px solid #dedede;box-sizing:border-box;"></div>
<svg style="position:absolute;left:1164px;top:66px" width="9" height="5" viewBox="0 0 9 5"><path d="M0 5 H9 L4.5 0.5 Z" fill="#606060"/></svg>
<div style="position:absolute;left:1163px;top:123px;width:11px;height:193px;background:linear-gradient(90deg,#f2f2f2,#fbfbfb 50%,#f4f4f4);border-top:1px solid #d4d4d4;border-bottom:1px solid #d4d4d4;box-sizing:border-box;"></div>
<div style="position:absolute;left:1162px;top:364px;width:12px;height:13px;background:#fff;border-left:1px solid #d8d8d8;border-top:1px solid #dedede;box-sizing:border-box;"></div>
<svg style="position:absolute;left:1164px;top:368px" width="9" height="5" viewBox="0 0 9 5"><path d="M0 0 H9 L4.5 4.5 Z" fill="#606060"/></svg>
<div style="position:absolute;z-index:2;left:761px;top:383px;width:414px;height:19px;background:linear-gradient(#fefefe,#e6e6e6);border:1.5px solid #262626;box-sizing:border-box;"></div>
<svg style="position:absolute;z-index:3;left:765px;top:389px" width="8" height="8" viewBox="0 0 8 8"><path d="M7 0.5 V7 H0.5 Z" fill="#111"/></svg>
<div class="t" style="z-index:3;left:775px;top:387.5px;font-size:11px;color:#111;">Vista items</div>
<svg style="position:absolute;z-index:3;left:0;top:0" width="1212" height="576" viewBox="0 0 1212 576"><path d="M1085.2 391.3 L1087.6 394.3 L1091.6 388.9" stroke="#1a5cb0" stroke-width="1.6" fill="none"/><rect x="1102.6" y="387.4" width="6.8" height="9.4" rx="0.8" fill="#f6f6f6" stroke="#555" stroke-width="0.9"/><path d="M1103.8 389.6 H1107.5 M1103.8 391.6 H1106.5 M1103.8 393.6 H1106.5" stroke="#666" stroke-width="0.8"/><path d="M1107.3 391.2 H1111.5 L1113 392.7 V397 H1107.3 Z" fill="#333"/><path d="M1127.8 386.8 L1123.6 391.2 H1126.4 V394.6 H1129.2 V391.2 H1132 Z" fill="#0a5ac0"/><path d="M1123.5 396.6 H1132" stroke="#222" stroke-width="1.3"/><path d="M1121 396.6 H1122.5" stroke="#222" stroke-width="1.3"/><path d="M1142.6 387.6 H1151.2" stroke="#222" stroke-width="1.3"/><path d="M1140 387.6 H1141.5" stroke="#222" stroke-width="1.3"/><path d="M1146 397.6 L1142.2 393 H1144.8 V389.6 H1147.4 V393 H1149.9 Z" fill="#0a5ac0"/><path d="M1160 386.6 Q1161.5 388.5 1164 390.8" stroke="#555" stroke-width="0.8" fill="none"/><ellipse cx="1167.2" cy="394.2" rx="3.1" ry="4.4" transform="rotate(-42 1167.2 394.2)" fill="none" stroke="#555" stroke-width="0.9"/><path d="M1164.6 391.4 L1167 394" stroke="#555" stroke-width="0.8"/></svg>
<div style="position:absolute;left:761px;top:401px;width:414px;height:66px;background:#fff;border:1px solid #cfcfcf;border-top:none;box-sizing:border-box;"></div>
<div style="position:absolute;left:762px;top:401px;width:400px;height:19px;background:linear-gradient(#fafafa,#e8e8e8);border-bottom:1px solid #c4c4c4;box-sizing:border-box;"></div>
<div style="position:absolute;left:1060px;top:402px;width:1px;height:17px;background:#d0d0d0;"></div>
<div style="position:absolute;left:1133px;top:402px;width:1px;height:17px;background:#d0d0d0;"></div>
<div class="t" style="left:764px;top:407px;font-size:11px;color:#111;">Item name</div>
<div class="t" style="left:1062px;top:407px;font-size:11px;color:#111;">Module name</div>
<div style="position:absolute;left:1136px;top:403px;width:26px;height:16px;overflow:hidden;"><div class="t" style="left:0;top:4px;font-size:11px;color:#111;">Place</div></div>
<svg style="position:absolute;left:767px;top:425px" width="8" height="5" viewBox="0 0 8 5"><path d="M0 0 H8 L4 4.5 Z" fill="#555"/></svg>
<div class="t" style="left:783px;top:423px;font-size:11px;color:#000;">Vista Items</div>
<svg style="position:absolute;left:786px;top:438px" width="8" height="5" viewBox="0 0 8 5"><path d="M0 0 H8 L4 4.5 Z" fill="#555"/></svg>
<div class="t" style="left:801px;top:436.4px;font-size:10.6px;color:#000;">Layer&nbsp; #1</div>
<div style="position:absolute;left:762px;top:448px;width:400px;height:5px;overflow:hidden;"><div style="position:absolute;left:57px;top:0;width:13px;height:12px;border:1px solid #999;box-sizing:border-box;"></div><div style="position:absolute;left:65px;top:3px;width:2px;height:2px;background:#222;"></div><div class="t" style="left:76px;top:2px;font-size:11px;color:#000;">S</div></div>
<div style="position:absolute;left:1162px;top:402px;width:12px;height:51px;background:linear-gradient(90deg,#f2f2f2,#fbfbfb 50%,#f4f4f4);border-left:1px solid #d8d8d8;box-sizing:border-box;"></div>
<svg style="position:absolute;left:1164px;top:406px" width="9" height="5" viewBox="0 0 9 5"><path d="M0 5 H9 L4.5 0.5 Z" fill="#606060"/></svg>
<svg style="position:absolute;left:1164px;top:444px" width="9" height="5" viewBox="0 0 9 5"><path d="M0 0 H9 L4.5 4.5 Z" fill="#606060"/></svg>
<div style="position:absolute;left:762px;top:453px;width:400px;height:13px;background:linear-gradient(#f4f4f4,#fcfcfc 50%,#efefef);border-top:1px solid #d8d8d8;box-sizing:border-box;"></div>
<div style="position:absolute;left:762px;top:454px;width:13px;height:12px;background:#fff;border-right:1px solid #d8d8d8;box-sizing:border-box;"></div>
<svg style="position:absolute;left:765px;top:456px" width="5" height="8" viewBox="0 0 5 8"><path d="M5 0 V8 L0.5 4 Z" fill="#606060"/></svg>
<div style="position:absolute;z-index:2;left:761px;top:472px;width:414px;height:18px;background:linear-gradient(#fefefe,#e6e6e6);border:1.5px solid #262626;box-sizing:border-box;"></div>
<svg style="position:absolute;z-index:3;left:765px;top:478px" width="8" height="8" viewBox="0 0 8 8"><path d="M7 0.5 V7 H0.5 Z" fill="#111"/></svg>
<div class="t" style="z-index:3;left:775px;top:476.5px;font-size:11px;color:#111;">Vista item properties</div>
<div style="position:absolute;left:761px;top:490px;width:414px;height:65px;background:#fff;border:1px solid #cfcfcf;border-top:none;box-sizing:border-box;"></div>
<div style="position:absolute;left:762px;top:490px;width:412px;height:18px;background:linear-gradient(#fafafa,#e8e8e8);border-bottom:1px solid #c4c4c4;box-sizing:border-box;"></div>
<div class="t" style="left:764px;top:495px;font-size:11px;color:#111;">Name</div>
<div class="t" style="left:783px;top:513px;font-size:11px;color:#111;">Transparency</div>
<div style="position:absolute;left:762px;top:527px;width:412px;height:15px;background:#e7e6e3;"></div>
<div class="t" style="left:783px;top:532px;font-size:11px;color:#111;">Color bar</div>
<div style="position:absolute;left:762px;top:542px;width:412px;height:12px;background:linear-gradient(#f4f4f4,#fcfcfc 50%,#efefef);border-top:1px solid #d8d8d8;box-sizing:border-box;"></div>
<div style="position:absolute;left:762px;top:542px;width:13px;height:12px;background:#fff;border-right:1px solid #d8d8d8;border-top:1px solid #d8d8d8;box-sizing:border-box;"></div>
<svg style="position:absolute;left:765px;top:544px" width="5" height="8" viewBox="0 0 5 8"><path d="M5 0 V8 L0.5 4 Z" fill="#606060"/></svg>
<svg style="position:absolute;z-index:5;left:0;top:0" width="1212" height="576" viewBox="0 0 1212 576"><rect x="847.5" y="447.5" width="362" height="124" rx="21" ry="21" fill="#fff" stroke="#000" stroke-width="1.4"/><path d="M1034 447 L937.5 130.5" stroke="#000" stroke-width="1.1"/><path d="M1034 447 L942.5 341" stroke="#000" stroke-width="1.1"/><path d="M934 120 L931.8 134.8 L937.2 130.2 L946 131.8 Z" fill="#000"/><path d="M935.7 332.9 L939.2 347.6 L942.3 340.6 L950.5 338.4 Z" fill="#000"/></svg>
<div class="t" style="z-index:6;left:848px;top:464px;width:362px;text-align:center;font-family:'Liberation Serif',serif;font-size:35.5px;line-height:40px;color:#000;-webkit-text-stroke:0;">Enable a color bar<br>and remove grid lines</div>
</body></html>
